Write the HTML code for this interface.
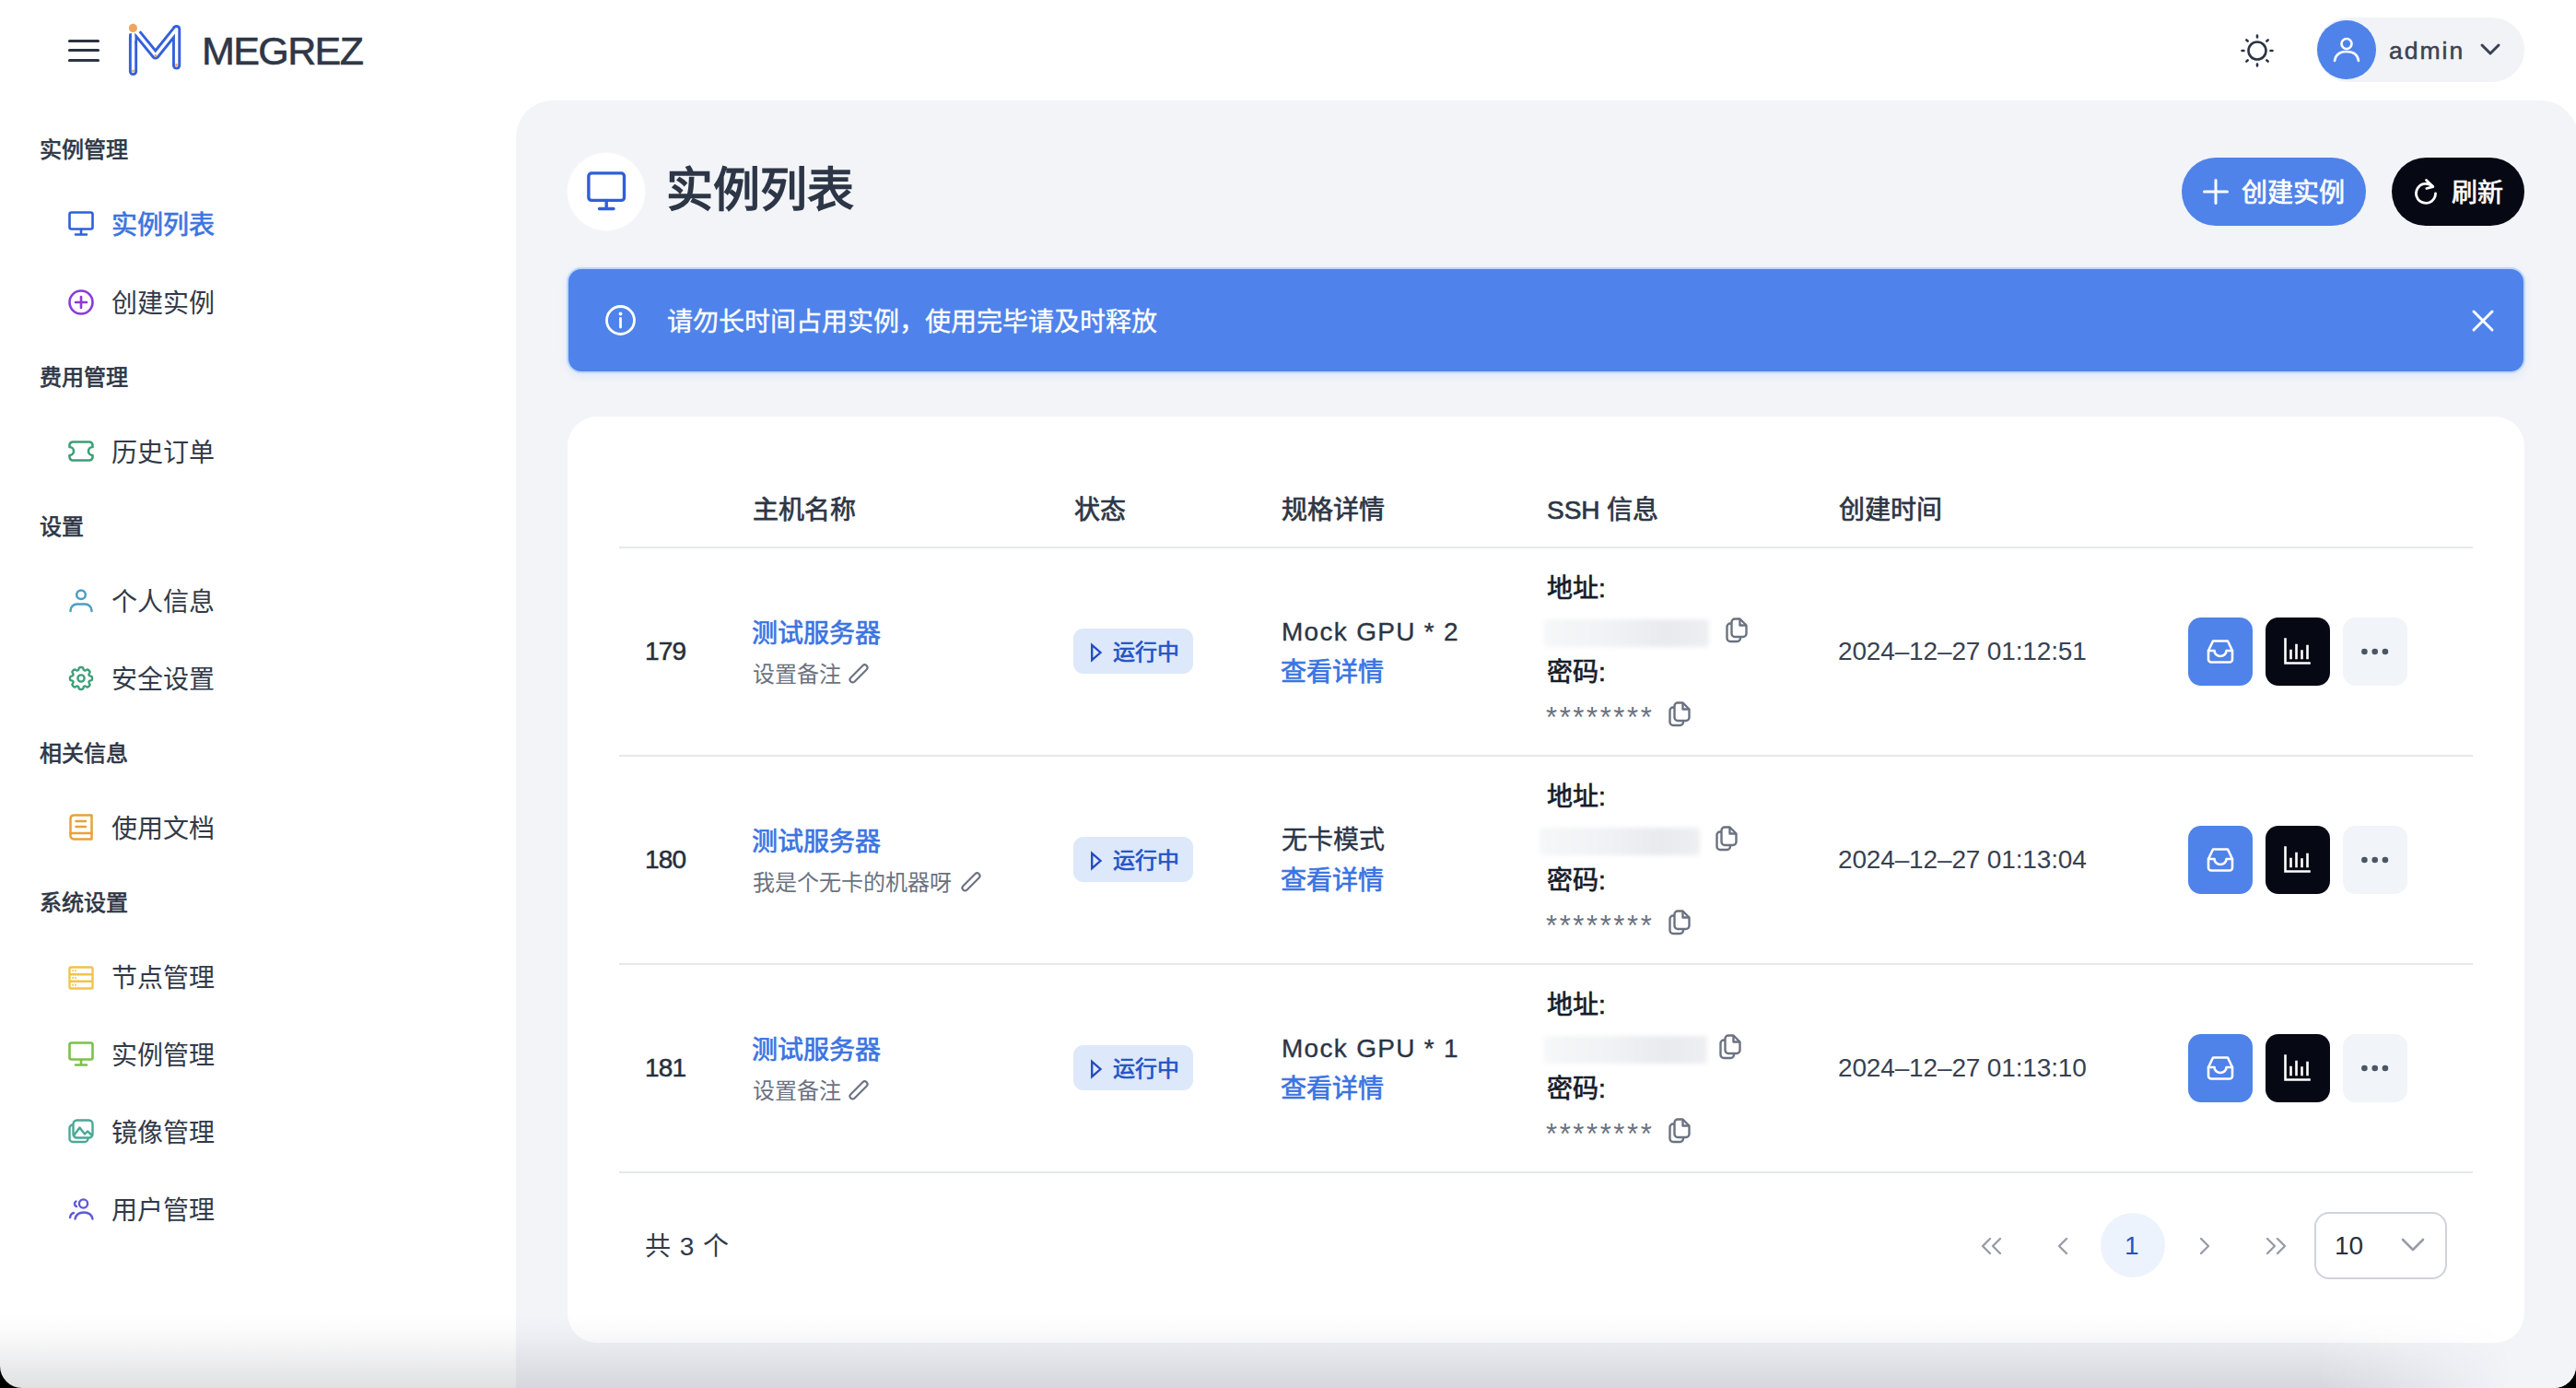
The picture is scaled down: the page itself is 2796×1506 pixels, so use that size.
<!DOCTYPE html>
<html lang="zh-CN"><head><meta charset="utf-8">
<style>
*{box-sizing:border-box;margin:0;padding:0}
html,body{width:2796px;height:1506px;overflow:hidden;background:#000}
body{font-family:"Liberation Sans",sans-serif;position:relative}
#win{position:absolute;left:0;top:0;width:2796px;height:1506px;background:#fff;border-radius:0 0 24px 24px;overflow:hidden}
.a{position:absolute;white-space:nowrap}
svg{position:absolute;overflow:visible}
/* sidebar */
.sec{position:absolute;margin-top:1px;left:43px;font-size:24px;line-height:30px;height:30px;font-weight:400;-webkit-text-stroke:0.7px currentColor;color:#2e3645}
.it{position:absolute;left:121px;font-size:28px;line-height:34px;height:34px;color:#323a48;margin-top:2px}
.ic{position:absolute;left:74px;width:28px;height:28px}
#panel{position:absolute;left:560px;top:109px;width:2238px;height:1500px;background:#f2f4f8;border-radius:40px}
#card{position:absolute;left:616px;top:452px;width:2124px;height:1005px;background:#fff;border-radius:32px}
.th{position:absolute;top:539px;font-size:28px;line-height:30px;font-weight:400;-webkit-text-stroke:0.7px currentColor;color:#2d3646}
.hr{position:absolute;left:672px;width:2012px;height:2px;background:#e6e8ec}
.t28{font-size:28px;line-height:30px;height:30px}
.dark{color:#262f3d}
.blue{color:#3b74e2}
.gray{color:#6b7280}
.badge{position:absolute;left:1165px;width:130px;height:49px;border-radius:11px;background:#dde8fb}
.btn{position:absolute;width:70px;height:74px;border-radius:14px}
.blur{position:absolute;height:30px;border-radius:4px;background:linear-gradient(90deg,#f6f7f9 0%,#f1f2f5 40%,#e9eaee 75%,#eeeff2 100%);filter:blur(2.5px)}
#shade{position:absolute;left:0;top:1426px;width:2796px;height:80px;pointer-events:none;
background:linear-gradient(180deg,rgba(20,24,40,0) 0%,rgba(20,24,40,.02) 25%,rgba(20,24,40,.055) 50%,rgba(20,24,40,.095) 75%,rgba(20,24,40,.13) 100%);
-webkit-mask-image:linear-gradient(90deg,#000 0%,#000 90%,rgba(0,0,0,0) 97.5%)}
</style></head>
<body>
<div id="win">

<!-- ===== top header ===== -->
<svg style="left:72px;top:41px" width="38" height="28" viewBox="0 0 38 28">
 <path d="M3.5 3.5H34.5M3.5 13.5H34.5M3.5 24.5H34.5" stroke="#2c3443" stroke-width="3.2" stroke-linecap="round" fill="none"/>
</svg>

<!-- logo -->
<svg style="left:130px;top:18px" width="76" height="70" viewBox="0 0 76 70">
 <g fill="none" stroke="#3461dc" stroke-width="9.2" stroke-linejoin="round">
  <path d="M14.5 22V59.5" stroke-linecap="round"/><path d="M19.2 18.2L38.8 42L61.6 13.6"/><path d="M61.6 13.6V53" stroke-linecap="round"/>
 </g>
 <g fill="none" stroke="#fff" stroke-width="3.4" stroke-linejoin="round">
  <path d="M14.5 22V59.5" stroke-linecap="round"/><path d="M18.4 17.2L38.8 42L61.6 13.6"/><path d="M61.6 13.6V53" stroke-linecap="round"/>
 </g>
 <path d="M12.7 17H16.3V27H12.7Z" fill="#fff"/>
 <path d="M11.4 18.5V28M17.6 26.2V29" stroke="#3461dc" stroke-width="2.6" fill="none"/>
 <circle cx="14.4" cy="12.4" r="4.6" fill="#eda65c"/>
 <circle cx="14.5" cy="59" r="1.4" fill="#eda65c"/>
 <circle cx="38.8" cy="42.5" r="1.4" fill="#eda65c"/>
 <circle cx="61.5" cy="52.5" r="1.4" fill="#eda65c"/>
</svg>
<div class="a" style="left:219px;top:33px;font-size:43px;line-height:44px;color:#2f3747;letter-spacing:-1.6px;-webkit-text-stroke:0.6px currentColor">MEGREZ</div>

<!-- sun -->
<svg style="left:2432px;top:37px" width="36" height="36" viewBox="0 0 36 36">
 <circle cx="18" cy="18" r="9.5" fill="none" stroke="#2c3443" stroke-width="2.6"/>
 <g stroke="#2c3443" stroke-width="2.6" stroke-linecap="round">
  <path d="M18 1.5V3.5M18 32.5V34.5M1.5 18H3.5M32.5 18H34.5M6.3 6.3L7.7 7.7M28.3 28.3L29.7 29.7M6.3 29.7L7.7 28.3M28.3 7.7L29.7 6.3"/>
 </g>
</svg>

<!-- user pill -->
<div class="a" style="left:2514px;top:19px;width:226px;height:70px;border-radius:35px;background:#f1f3f7"></div>
<div class="a" style="left:2515px;top:22px;width:64px;height:64px;border-radius:32px;background:#4f83ea"></div>
<svg style="left:2532px;top:40px" width="30" height="28" viewBox="0 0 30 28">
 <g fill="none" stroke="#fff" stroke-width="2.6" stroke-linecap="round">
  <circle cx="15" cy="7.5" r="5.5"/>
  <path d="M2 26 C3 19 8 16 15 16 C22 16 27 19 28 26"/>
 </g>
</svg>
<div class="a" style="left:2593px;top:40px;font-size:26.5px;line-height:30px;color:#3a4252;letter-spacing:2px;-webkit-text-stroke:0.5px currentColor">admin</div>
<svg style="left:2692px;top:46px" width="22" height="16" viewBox="0 0 22 16">
 <path d="M2 3 L11 12 L20 3" fill="none" stroke="#3a4252" stroke-width="3" stroke-linecap="round" stroke-linejoin="round"/>
</svg>

<!-- ===== sidebar ===== -->
<div class="sec" style="top:147px">实例管理</div>
<svg class="ic" style="top:229px" viewBox="0 0 28 28"><g fill="none" stroke="#2f60d8" stroke-width="2.6" stroke-linecap="round"><rect x="1.5" y="1.5" width="25" height="18" rx="2"/><path d="M14 20V25M8 25.5H20"/></g></svg>
<div class="it" style="top:226px;color:#3d74e0;font-weight:400;-webkit-text-stroke:0.7px currentColor">实例列表</div>
<svg class="ic" style="top:314px" viewBox="0 0 28 28"><g fill="none" stroke="#8a3bd8" stroke-width="2.6" stroke-linecap="round"><circle cx="14" cy="14" r="12.5"/><path d="M14 8V20M8 14H20"/></g></svg>
<div class="it" style="top:311px">创建实例</div>

<div class="sec" style="top:394px">费用管理</div>
<svg class="ic" style="top:478px;height:23px" viewBox="0 0 28 23"><path d="M5 1.5H23A3.5 3.5 0 0 1 26.5 5V7A4.5 4.5 0 0 0 26.5 16V18A3.5 3.5 0 0 1 23 21.5H5A3.5 3.5 0 0 1 1.5 18V16A4.5 4.5 0 0 0 1.5 7V5A3.5 3.5 0 0 1 5 1.5Z" fill="none" stroke="#3d9f78" stroke-width="2.6" stroke-linejoin="round"/></svg>
<div class="it" style="top:473px">历史订单</div>

<div class="sec" style="top:556px">设置</div>
<svg class="ic" style="top:638px" viewBox="0 0 28 28"><g fill="none" stroke="#4b9ec4" stroke-width="2.5" stroke-linecap="round"><circle cx="14" cy="7.3" r="4.8"/><path d="M2.5 25V24.5A7 7 0 0 1 9.5 17.5H18.5A7 7 0 0 1 25.5 24.5V25"/></g></svg>
<div class="it" style="top:635px">个人信息</div>
<svg class="ic" style="top:722px" viewBox="0 0 28 28"><g fill="none" stroke="#3d9f78" stroke-width="2.4" stroke-linejoin="round"><path d="M10.47 5.47Q11.51 5.04 11.58 3.48Q11.65 1.93 14.00 1.93Q16.35 1.93 16.42 3.48Q16.49 5.04 17.53 5.47Q18.58 5.91 19.73 4.85Q20.88 3.80 22.54 5.46Q24.20 7.12 23.15 8.27Q22.09 9.42 22.53 10.47Q22.96 11.51 24.52 11.58Q26.07 11.65 26.07 14.00Q26.07 16.35 24.52 16.42Q22.96 16.49 22.53 17.53Q22.09 18.58 23.15 19.73Q24.20 20.88 22.54 22.54Q20.88 24.20 19.73 23.15Q18.58 22.09 17.53 22.53Q16.49 22.96 16.42 24.52Q16.35 26.07 14.00 26.07Q11.65 26.07 11.58 24.52Q11.51 22.96 10.47 22.53Q9.42 22.09 8.27 23.15Q7.12 24.20 5.46 22.54Q3.80 20.88 4.85 19.73Q5.91 18.58 5.47 17.53Q5.04 16.49 3.48 16.42Q1.93 16.35 1.93 14.00Q1.93 11.65 3.48 11.58Q5.04 11.51 5.47 10.47Q5.91 9.42 4.85 8.27Q3.80 7.12 5.46 5.46Q7.12 3.80 8.27 4.85Q9.42 5.91 10.47 5.47Z"/><circle cx="14" cy="14" r="3.6"/></g></svg>
<div class="it" style="top:719px">安全设置</div>

<div class="sec" style="top:802px">相关信息</div>
<svg class="ic" style="top:882px" viewBox="0 0 28 28"><g fill="none" stroke="#e6a23b" stroke-width="2.5" stroke-linecap="round" stroke-linejoin="round"><path d="M25.5 2.5H6A4 4 0 0 0 2.5 6.5V25A3.5 3.5 0 0 0 6 28.5H25.5Z"/><path d="M2.5 22H25.5"/><path d="M8.5 9H19M8.5 15H19"/></g></svg>
<div class="it" style="top:881px">使用文档</div>

<div class="sec" style="top:964px">系统设置</div>
<svg class="ic" style="top:1047px" viewBox="0 0 28 26"><g fill="none" stroke="#f0c44c" stroke-width="2.4"><rect x="1.5" y="1.5" width="25" height="23" rx="1.5"/><path d="M1.5 9.2H26.5M1.5 16.8H26.5"/></g><g fill="#f0c44c"><circle cx="5" cy="5.3" r="1"/><circle cx="8" cy="5.3" r="1"/><circle cx="5" cy="13" r="1"/><circle cx="8" cy="13" r="1"/><circle cx="5" cy="20.7" r="1"/><circle cx="8" cy="20.7" r="1"/></g></svg>
<div class="it" style="top:1043px">节点管理</div>
<svg class="ic" style="top:1130px" viewBox="0 0 28 28"><g fill="none" stroke="#7cc04a" stroke-width="2.6" stroke-linecap="round"><rect x="1.5" y="1.5" width="25" height="18" rx="2"/><path d="M14 20V25M8 25.5H20"/></g></svg>
<div class="it" style="top:1127px">实例管理</div>
<svg class="ic" style="top:1214px" viewBox="0 0 28 28"><g fill="none" stroke="#4aa896" stroke-width="2.4" stroke-linejoin="round" stroke-linecap="round"><rect x="5.5" y="1.5" width="21" height="19" rx="4"/><path d="M5 6.5A3.5 3.5 0 0 0 1.5 10V21.5A3.5 3.5 0 0 0 5 25H18A3.5 3.5 0 0 0 21.5 21.5"/><path d="M6.5 17.5L12.5 9.5L18 16.5L21 13.5L26 18"/></g></svg>
<div class="it" style="top:1211px">镜像管理</div>
<svg class="ic" style="top:1298px" viewBox="0 0 28 28"><g fill="none" stroke="#5f59d6" stroke-width="2.4" stroke-linecap="round"><circle cx="16.5" cy="8" r="4.6"/><path d="M7.5 24.5C8.5 19.5 11.5 17.5 17 17.5S25.5 19.5 26.5 24.5"/><path d="M8.5 5.5A3 3 0 0 0 9 11M2 23C2.5 20 4 18.5 6 18"/></g></svg>
<div class="it" style="top:1295px">用户管理</div>

<!-- ===== main panel ===== -->
<div id="panel"></div>

<!-- PAGE_HEADER -->
<div class="a" style="left:616px;top:166px;width:84px;height:84px;border-radius:42px;background:#fff;box-shadow:0 0 3px rgba(255,255,255,.9)"></div>
<svg style="left:637px;top:186px" width="42" height="42" viewBox="0 0 42 42"><g fill="none" stroke="#2f5fd8" stroke-width="3.4" stroke-linecap="round"><rect x="1.9" y="1.9" width="38.6" height="29.5" rx="3.2"/><path d="M21.2 31.5V39.5M13.5 40.5H29"/></g></svg>
<div class="a" style="left:723px;top:177px;font-size:51px;line-height:60px;font-weight:bold;color:#2d3646">实例列表</div>

<div class="a" style="left:2368px;top:171px;width:200px;height:74px;border-radius:37px;background:#4f83ea"></div>
<svg style="left:2391px;top:194px" width="28" height="28" viewBox="0 0 28 28"><path d="M14 1.5V26.5M1.5 14H26.5" stroke="#fff" stroke-width="3" stroke-linecap="round"/></svg>
<div class="a" style="left:2433px;top:194px;font-size:28px;line-height:32px;color:#fff;font-weight:400;-webkit-text-stroke:0.7px currentColor">创建实例</div>
<div class="a" style="left:2596px;top:171px;width:144px;height:74px;border-radius:37px;background:#060913"></div>
<svg style="left:2620px;top:194px" width="26" height="28" viewBox="0 0 26 28"><g fill="none" stroke="#fff" stroke-width="2.8" stroke-linecap="round" stroke-linejoin="round"><path d="M20.5 8.5A10.5 10.5 0 1 0 23.5 16"/><path d="M13.5 1.5L20.8 8.6L13.8 10.5"/></g></svg>
<div class="a" style="left:2661px;top:194px;font-size:28px;line-height:32px;color:#fff;font-weight:400;-webkit-text-stroke:0.7px currentColor">刷新</div>

<!-- alert -->
<div class="a" style="left:615px;top:290px;width:2126px;height:115px;border-radius:16px;background:#4f83eb;border:2px solid #bcd7f7;box-shadow:0 3px 8px rgba(79,131,235,.10)"></div>
<svg style="left:657px;top:331px" width="33" height="33" viewBox="0 0 33 33"><g fill="none" stroke="#fff" stroke-width="2.8" stroke-linecap="round"><circle cx="16.5" cy="16.5" r="15"/><path d="M16.5 14.5V24"/></g><circle cx="16.5" cy="9.5" r="1.9" fill="#fff"/></svg>
<div class="a" style="left:724px;top:334px;font-size:28px;line-height:32px;color:#fff;-webkit-text-stroke:0.35px currentColor">请勿长时间占用实例，使用完毕请及时释放</div>
<svg style="left:2683px;top:336px" width="24" height="24" viewBox="0 0 24 24"><path d="M2 2L22 22M22 2L2 22" stroke="#fff" stroke-width="3" stroke-linecap="round"/></svg>


<!-- TABLE -->
<div id="card"></div>
<div class="th" style="left:817px">主机名称</div>
<div class="th" style="left:1166px">状态</div>
<div class="th" style="left:1391px">规格详情</div>
<div class="th" style="left:1679px">SSH 信息</div>
<div class="th" style="left:1996px">创建时间</div>
<div class="hr" style="top:593px"></div>
<div class="a t28 dark" style="left:700px;top:692px;letter-spacing:-0.8px;-webkit-text-stroke:0.5px currentColor">179</div>
<div class="a t28 blue" style="left:816px;top:673px;font-weight:400;-webkit-text-stroke:0.7px currentColor">测试服务器</div>
<div class="a gray" style="left:817px;top:718px;font-size:24px;line-height:28px">设置备注</div>
<svg style="left:921px;top:720px" width="22" height="22" viewBox="0 0 22 22"><rect x="-3" y="-12.2" width="6" height="24.4" rx="3" transform="translate(11 10.8) rotate(45)" fill="none" stroke="#6b7280" stroke-width="2.1"/></svg>
<div class="badge" style="top:682px"></div>
<svg style="left:1183px;top:697px" width="14" height="22" viewBox="0 0 14 22"><path d="M2.2 2.8L11.5 11L2.2 19.2Z" fill="none" stroke="#2349c2" stroke-width="2.3" stroke-linejoin="miter"/></svg>
<div class="a" style="left:1208px;top:693px;font-size:24px;line-height:30px;color:#2454c5;font-weight:400;-webkit-text-stroke:0.7px currentColor">运行中</div>
<div class="a t28 dark" style="left:1391px;top:671px;letter-spacing:1.3px;-webkit-text-stroke:0.35px currentColor;color:#2b3545">Mock GPU * 2</div>
<div class="a t28 blue" style="left:1390px;top:715px;font-weight:400;-webkit-text-stroke:0.7px currentColor">查看详情</div>
<div class="a t28" style="left:1679px;top:624px;font-weight:400;-webkit-text-stroke:0.7px currentColor;color:#161c28">地址:</div>
<div class="blur" style="left:1676px;top:672px;width:179px"></div>
<svg style="left:1873px;top:670px" width="24" height="28" viewBox="0 0 24 28"><g fill="none" stroke="#6b7280" stroke-width="2.4" stroke-linejoin="round"><path d="M7 6.5H5A3.5 3.5 0 0 0 1.5 10V22.5A3.5 3.5 0 0 0 5 26H12.5A3.5 3.5 0 0 0 16 22.5V21"/><path d="M10 1.5H15.5L22.5 8.5V17.5A3.5 3.5 0 0 1 19 21H10A3.5 3.5 0 0 1 6.5 17.5V5A3.5 3.5 0 0 1 10 1.5Z"/><path d="M15.5 1.5V8.5H22.5"/></g></svg>
<div class="a t28" style="left:1679px;top:715px;font-weight:400;-webkit-text-stroke:0.7px currentColor;color:#161c28">密码:</div>
<div class="a gray" style="left:1678px;top:764px;font-size:31px;line-height:30px;letter-spacing:2.6px">********</div>
<svg style="left:1811px;top:761px" width="24" height="28" viewBox="0 0 24 28"><g fill="none" stroke="#6b7280" stroke-width="2.4" stroke-linejoin="round"><path d="M7 6.5H5A3.5 3.5 0 0 0 1.5 10V22.5A3.5 3.5 0 0 0 5 26H12.5A3.5 3.5 0 0 0 16 22.5V21"/><path d="M10 1.5H15.5L22.5 8.5V17.5A3.5 3.5 0 0 1 19 21H10A3.5 3.5 0 0 1 6.5 17.5V5A3.5 3.5 0 0 1 10 1.5Z"/><path d="M15.5 1.5V8.5H22.5"/></g></svg>
<div class="a t28" style="left:1995px;top:692px;color:#374151;letter-spacing:-0.15px">2024–12–27 01:12:51</div>
<div class="btn" style="left:2375px;top:670px;background:#4f83ea"></div>
<svg style="left:2395px;top:693px" width="30" height="28" viewBox="0 0 30 28"><g fill="none" stroke="#fff" stroke-width="2.6" stroke-linejoin="round" stroke-linecap="round"><path d="M2 13V22.5A3 3 0 0 0 5 25.5H25A3 3 0 0 0 28 22.5V13L23 2.5H7Z"/><path d="M2 13H8.5A6.5 6 0 0 0 21.5 13H28"/></g></svg>
<div class="btn" style="left:2459px;top:670px;background:#060913"></div>
<svg style="left:2478px;top:692px" width="30" height="30" viewBox="0 0 30 30"><g fill="none" stroke="#fff" stroke-width="2.6" stroke-linecap="square"><path d="M2.5 1.5V27.5H28.5"/><path d="M8.5 14V22M14.5 8V22M20.5 14.5V22M26.5 9V22"/></g></svg>
<div class="btn" style="left:2543px;top:670px;background:#f1f4f8"></div>
<svg style="left:2560px;top:700px" width="36" height="14" viewBox="0 0 36 14"><g fill="#4b5563"><circle cx="6.4" cy="7" r="3.3"/><circle cx="17.7" cy="7" r="3.3"/><circle cx="28.9" cy="7" r="3.3"/></g></svg>
<div class="hr" style="top:819px"></div>
<div class="a t28 dark" style="left:700px;top:918px;letter-spacing:-0.8px;-webkit-text-stroke:0.5px currentColor">180</div>
<div class="a t28 blue" style="left:816px;top:899px;font-weight:400;-webkit-text-stroke:0.7px currentColor">测试服务器</div>
<div class="a gray" style="left:817px;top:944px;font-size:24px;line-height:28px">我是个无卡的机器呀</div>
<svg style="left:1043px;top:946px" width="22" height="22" viewBox="0 0 22 22"><rect x="-3" y="-12.2" width="6" height="24.4" rx="3" transform="translate(11 10.8) rotate(45)" fill="none" stroke="#6b7280" stroke-width="2.1"/></svg>
<div class="badge" style="top:908px"></div>
<svg style="left:1183px;top:923px" width="14" height="22" viewBox="0 0 14 22"><path d="M2.2 2.8L11.5 11L2.2 19.2Z" fill="none" stroke="#2349c2" stroke-width="2.3" stroke-linejoin="miter"/></svg>
<div class="a" style="left:1208px;top:919px;font-size:24px;line-height:30px;color:#2454c5;font-weight:400;-webkit-text-stroke:0.7px currentColor">运行中</div>
<div class="a t28 dark" style="left:1391px;top:897px;-webkit-text-stroke:0.35px currentColor;color:#2b3545">无卡模式</div>
<div class="a t28 blue" style="left:1390px;top:941px;font-weight:400;-webkit-text-stroke:0.7px currentColor">查看详情</div>
<div class="a t28" style="left:1679px;top:850px;font-weight:400;-webkit-text-stroke:0.7px currentColor;color:#161c28">地址:</div>
<div class="blur" style="left:1671px;top:898px;width:174px"></div>
<svg style="left:1862px;top:896px" width="24" height="28" viewBox="0 0 24 28"><g fill="none" stroke="#6b7280" stroke-width="2.4" stroke-linejoin="round"><path d="M7 6.5H5A3.5 3.5 0 0 0 1.5 10V22.5A3.5 3.5 0 0 0 5 26H12.5A3.5 3.5 0 0 0 16 22.5V21"/><path d="M10 1.5H15.5L22.5 8.5V17.5A3.5 3.5 0 0 1 19 21H10A3.5 3.5 0 0 1 6.5 17.5V5A3.5 3.5 0 0 1 10 1.5Z"/><path d="M15.5 1.5V8.5H22.5"/></g></svg>
<div class="a t28" style="left:1679px;top:941px;font-weight:400;-webkit-text-stroke:0.7px currentColor;color:#161c28">密码:</div>
<div class="a gray" style="left:1678px;top:990px;font-size:31px;line-height:30px;letter-spacing:2.6px">********</div>
<svg style="left:1811px;top:987px" width="24" height="28" viewBox="0 0 24 28"><g fill="none" stroke="#6b7280" stroke-width="2.4" stroke-linejoin="round"><path d="M7 6.5H5A3.5 3.5 0 0 0 1.5 10V22.5A3.5 3.5 0 0 0 5 26H12.5A3.5 3.5 0 0 0 16 22.5V21"/><path d="M10 1.5H15.5L22.5 8.5V17.5A3.5 3.5 0 0 1 19 21H10A3.5 3.5 0 0 1 6.5 17.5V5A3.5 3.5 0 0 1 10 1.5Z"/><path d="M15.5 1.5V8.5H22.5"/></g></svg>
<div class="a t28" style="left:1995px;top:918px;color:#374151;letter-spacing:-0.15px">2024–12–27 01:13:04</div>
<div class="btn" style="left:2375px;top:896px;background:#4f83ea"></div>
<svg style="left:2395px;top:919px" width="30" height="28" viewBox="0 0 30 28"><g fill="none" stroke="#fff" stroke-width="2.6" stroke-linejoin="round" stroke-linecap="round"><path d="M2 13V22.5A3 3 0 0 0 5 25.5H25A3 3 0 0 0 28 22.5V13L23 2.5H7Z"/><path d="M2 13H8.5A6.5 6 0 0 0 21.5 13H28"/></g></svg>
<div class="btn" style="left:2459px;top:896px;background:#060913"></div>
<svg style="left:2478px;top:918px" width="30" height="30" viewBox="0 0 30 30"><g fill="none" stroke="#fff" stroke-width="2.6" stroke-linecap="square"><path d="M2.5 1.5V27.5H28.5"/><path d="M8.5 14V22M14.5 8V22M20.5 14.5V22M26.5 9V22"/></g></svg>
<div class="btn" style="left:2543px;top:896px;background:#f1f4f8"></div>
<svg style="left:2560px;top:926px" width="36" height="14" viewBox="0 0 36 14"><g fill="#4b5563"><circle cx="6.4" cy="7" r="3.3"/><circle cx="17.7" cy="7" r="3.3"/><circle cx="28.9" cy="7" r="3.3"/></g></svg>
<div class="hr" style="top:1045px"></div>
<div class="a t28 dark" style="left:700px;top:1144px;letter-spacing:-0.8px;-webkit-text-stroke:0.5px currentColor">181</div>
<div class="a t28 blue" style="left:816px;top:1125px;font-weight:400;-webkit-text-stroke:0.7px currentColor">测试服务器</div>
<div class="a gray" style="left:817px;top:1170px;font-size:24px;line-height:28px">设置备注</div>
<svg style="left:921px;top:1172px" width="22" height="22" viewBox="0 0 22 22"><rect x="-3" y="-12.2" width="6" height="24.4" rx="3" transform="translate(11 10.8) rotate(45)" fill="none" stroke="#6b7280" stroke-width="2.1"/></svg>
<div class="badge" style="top:1134px"></div>
<svg style="left:1183px;top:1149px" width="14" height="22" viewBox="0 0 14 22"><path d="M2.2 2.8L11.5 11L2.2 19.2Z" fill="none" stroke="#2349c2" stroke-width="2.3" stroke-linejoin="miter"/></svg>
<div class="a" style="left:1208px;top:1145px;font-size:24px;line-height:30px;color:#2454c5;font-weight:400;-webkit-text-stroke:0.7px currentColor">运行中</div>
<div class="a t28 dark" style="left:1391px;top:1123px;letter-spacing:1.3px;-webkit-text-stroke:0.35px currentColor;color:#2b3545">Mock GPU * 1</div>
<div class="a t28 blue" style="left:1390px;top:1167px;font-weight:400;-webkit-text-stroke:0.7px currentColor">查看详情</div>
<div class="a t28" style="left:1679px;top:1076px;font-weight:400;-webkit-text-stroke:0.7px currentColor;color:#161c28">地址:</div>
<div class="blur" style="left:1676px;top:1124px;width:177px"></div>
<svg style="left:1866px;top:1122px" width="24" height="28" viewBox="0 0 24 28"><g fill="none" stroke="#6b7280" stroke-width="2.4" stroke-linejoin="round"><path d="M7 6.5H5A3.5 3.5 0 0 0 1.5 10V22.5A3.5 3.5 0 0 0 5 26H12.5A3.5 3.5 0 0 0 16 22.5V21"/><path d="M10 1.5H15.5L22.5 8.5V17.5A3.5 3.5 0 0 1 19 21H10A3.5 3.5 0 0 1 6.5 17.5V5A3.5 3.5 0 0 1 10 1.5Z"/><path d="M15.5 1.5V8.5H22.5"/></g></svg>
<div class="a t28" style="left:1679px;top:1167px;font-weight:400;-webkit-text-stroke:0.7px currentColor;color:#161c28">密码:</div>
<div class="a gray" style="left:1678px;top:1216px;font-size:31px;line-height:30px;letter-spacing:2.6px">********</div>
<svg style="left:1811px;top:1213px" width="24" height="28" viewBox="0 0 24 28"><g fill="none" stroke="#6b7280" stroke-width="2.4" stroke-linejoin="round"><path d="M7 6.5H5A3.5 3.5 0 0 0 1.5 10V22.5A3.5 3.5 0 0 0 5 26H12.5A3.5 3.5 0 0 0 16 22.5V21"/><path d="M10 1.5H15.5L22.5 8.5V17.5A3.5 3.5 0 0 1 19 21H10A3.5 3.5 0 0 1 6.5 17.5V5A3.5 3.5 0 0 1 10 1.5Z"/><path d="M15.5 1.5V8.5H22.5"/></g></svg>
<div class="a t28" style="left:1995px;top:1144px;color:#374151;letter-spacing:-0.15px">2024–12–27 01:13:10</div>
<div class="btn" style="left:2375px;top:1122px;background:#4f83ea"></div>
<svg style="left:2395px;top:1145px" width="30" height="28" viewBox="0 0 30 28"><g fill="none" stroke="#fff" stroke-width="2.6" stroke-linejoin="round" stroke-linecap="round"><path d="M2 13V22.5A3 3 0 0 0 5 25.5H25A3 3 0 0 0 28 22.5V13L23 2.5H7Z"/><path d="M2 13H8.5A6.5 6 0 0 0 21.5 13H28"/></g></svg>
<div class="btn" style="left:2459px;top:1122px;background:#060913"></div>
<svg style="left:2478px;top:1144px" width="30" height="30" viewBox="0 0 30 30"><g fill="none" stroke="#fff" stroke-width="2.6" stroke-linecap="square"><path d="M2.5 1.5V27.5H28.5"/><path d="M8.5 14V22M14.5 8V22M20.5 14.5V22M26.5 9V22"/></g></svg>
<div class="btn" style="left:2543px;top:1122px;background:#f1f4f8"></div>
<svg style="left:2560px;top:1152px" width="36" height="14" viewBox="0 0 36 14"><g fill="#4b5563"><circle cx="6.4" cy="7" r="3.3"/><circle cx="17.7" cy="7" r="3.3"/><circle cx="28.9" cy="7" r="3.3"/></g></svg>
<div class="hr" style="top:1271px"></div>
<div class="a" style="left:700px;top:1338px;font-size:28px;line-height:30px;color:#323a48;word-spacing:2px">共 3 个</div>
<svg style="left:2149px;top:1340px" width="26" height="24" viewBox="0 0 26 24"><path d="M11 4L3 12L11 20M22 4L14 12L22 20" fill="none" stroke="#989da7" stroke-width="2.4" stroke-linecap="round" stroke-linejoin="round"/></svg>
<svg style="left:2232px;top:1340px" width="14" height="24" viewBox="0 0 14 24"><path d="M11 4L3 12L11 20" fill="none" stroke="#989da7" stroke-width="2.4" stroke-linecap="round" stroke-linejoin="round"/></svg>
<div class="a" style="left:2280px;top:1316px;width:70px;height:70px;border-radius:35px;background:#edf3fd"></div>
<div class="a" style="left:2306px;top:1337px;font-size:28px;line-height:30px;color:#2950c4">1</div>
<svg style="left:2386px;top:1340px" width="14" height="24" viewBox="0 0 14 24"><path d="M3 4L11 12L3 20" fill="none" stroke="#989da7" stroke-width="2.4" stroke-linecap="round" stroke-linejoin="round"/></svg>
<svg style="left:2457px;top:1340px" width="26" height="24" viewBox="0 0 26 24"><path d="M4 4L12 12L4 20M15 4L23 12L15 20" fill="none" stroke="#989da7" stroke-width="2.4" stroke-linecap="round" stroke-linejoin="round"/></svg>
<div class="a" style="left:2512px;top:1315px;width:144px;height:73px;border-radius:16px;border:2px solid #cfd3da;background:#fff"></div>
<div class="a" style="left:2534px;top:1337px;font-size:28px;line-height:30px;color:#262f3d">10</div>
<svg style="left:2605px;top:1342px" width="28" height="18" viewBox="0 0 28 18"><path d="M3 3L14 14L25 3" fill="none" stroke="#989da7" stroke-width="2.6" stroke-linecap="round" stroke-linejoin="round"/></svg>

<div id="shade"></div>
</div>
</body></html>
